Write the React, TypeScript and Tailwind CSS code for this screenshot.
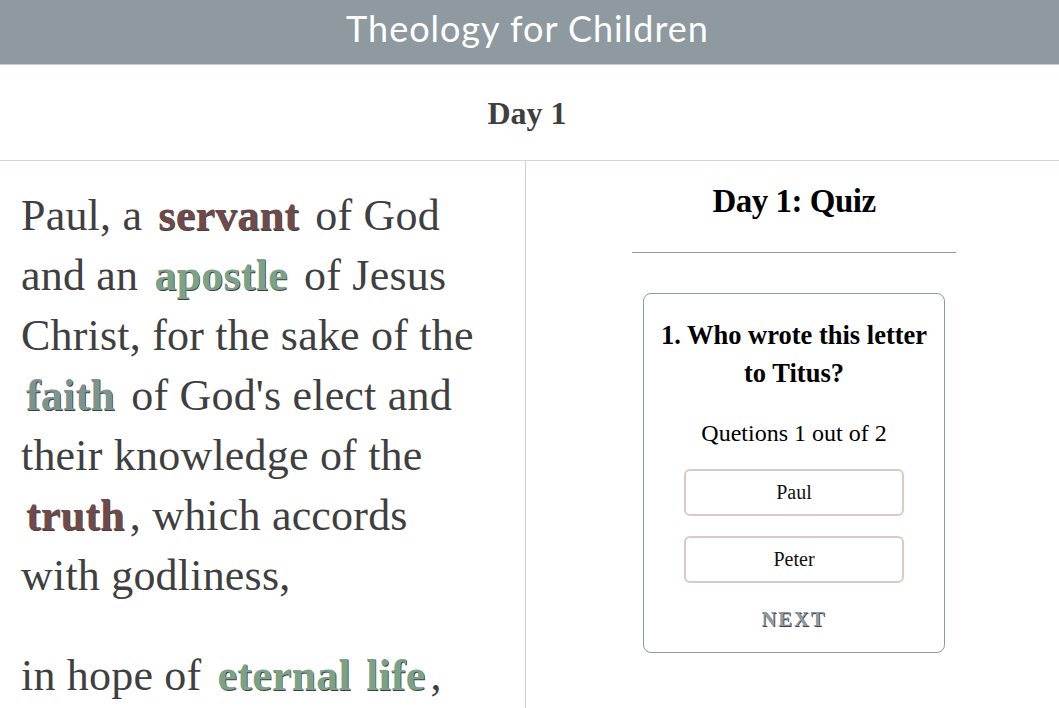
const serif = "font-['Liberation_Serif',serif]";

function Key({ children, tone }: { children: React.ReactNode; tone: 'red' | 'green' | 'slate' }) {
  const color =
    tone === 'red'
      ? 'text-[#6f4a4a] [text-shadow:0.7px_0.7px_0_#3f3f3f]'
      : tone === 'green'
        ? 'text-[#7ba287] [text-shadow:0.7px_0.7px_0_#3f3f3f]'
        : 'text-[#7c9490] [text-shadow:0.7px_0.7px_0_#3f3f3f]';
  return <span className={`mx-[5px] font-bold [word-spacing:4px] ${color}`}>{children}</span>;
}

function Answer({ label }: { label: string }) {
  return (
    <button className="w-[220px] h-[47px] rounded-[6px] border-2 border-[#dcc9c5] bg-white pb-[2px] text-[20px] text-[#111]">
      {label}
    </button>
  );
}

export default function App() {
  return (
    <div className={`h-[708px] overflow-hidden bg-white ${serif}`}>
      <header className="h-[65px] bg-[#8f9aa0] border-b border-[#dcc9c5] flex justify-center pt-[8px] pr-[4px]">
        <h1 className="font-['Lato',sans-serif] text-[36px] text-white tracking-[1px] leading-[40px]">
          Theology for Children
        </h1>
      </header>
      <div className="h-[96px] border-b border-[#e3cfcb] flex items-center justify-center pr-[5px]">
        <h2 className="text-[32px] font-bold text-[#3f3f3f]">Day 1</h2>
      </div>
      <div className="flex h-[547px]">
        <div className="w-[526px] shrink-0 border-r border-[#d6d0ce] pl-[21px] pr-[30px] pt-[25px] text-[44px] leading-[60px] tracking-[0.2px] text-[#3f3f3f]">
          <p className="mb-[40px]">
            Paul, a <Key tone="red">servant</Key> of God and an <Key tone="green">apostle</Key> of Jesus Christ, for the
            sake of the <Key tone="slate">faith</Key> of God's elect and their knowledge of the{' '}
            <Key tone="red">truth</Key>, which accords with godliness,
          </p>
          <p>
            in hope of <Key tone="green">eternal life</Key>,
          </p>
        </div>
        <div className="flex-1 pl-[3px] flex flex-col items-center text-black">
          <h3 className="mt-[18px] text-[33px] leading-[44px] font-bold tracking-[-0.5px]">Day 1: Quiz</h3>
          <div className="mt-[29px] w-[324px] border-t border-[#8f9aa0]" />
          <div className="mt-[40px] w-[302px] h-[360px] rounded-[8px] border border-[#8f9aa0] flex flex-col items-center pt-[22px]">
            <p className="text-[26.5px] leading-[38px] font-bold text-center w-[280px]">1. Who wrote this letter to Titus?</p>
            <p className="mt-[26px] text-[24px] leading-[30px]">Quetions 1 out of 2</p>
            <div className="mt-[21px] flex flex-col gap-[20px]">
              <Answer label="Paul" />
              <Answer label="Peter" />
            </div>
            <span className="mt-[23px] text-[20.5px] leading-[26px] font-bold tracking-[2px] text-[#8f9aa0] [text-shadow:0.7px_0.7px_0_#3f3f3f]">
              NEXT
            </span>
          </div>
        </div>
      </div>
    </div>
  );
}
